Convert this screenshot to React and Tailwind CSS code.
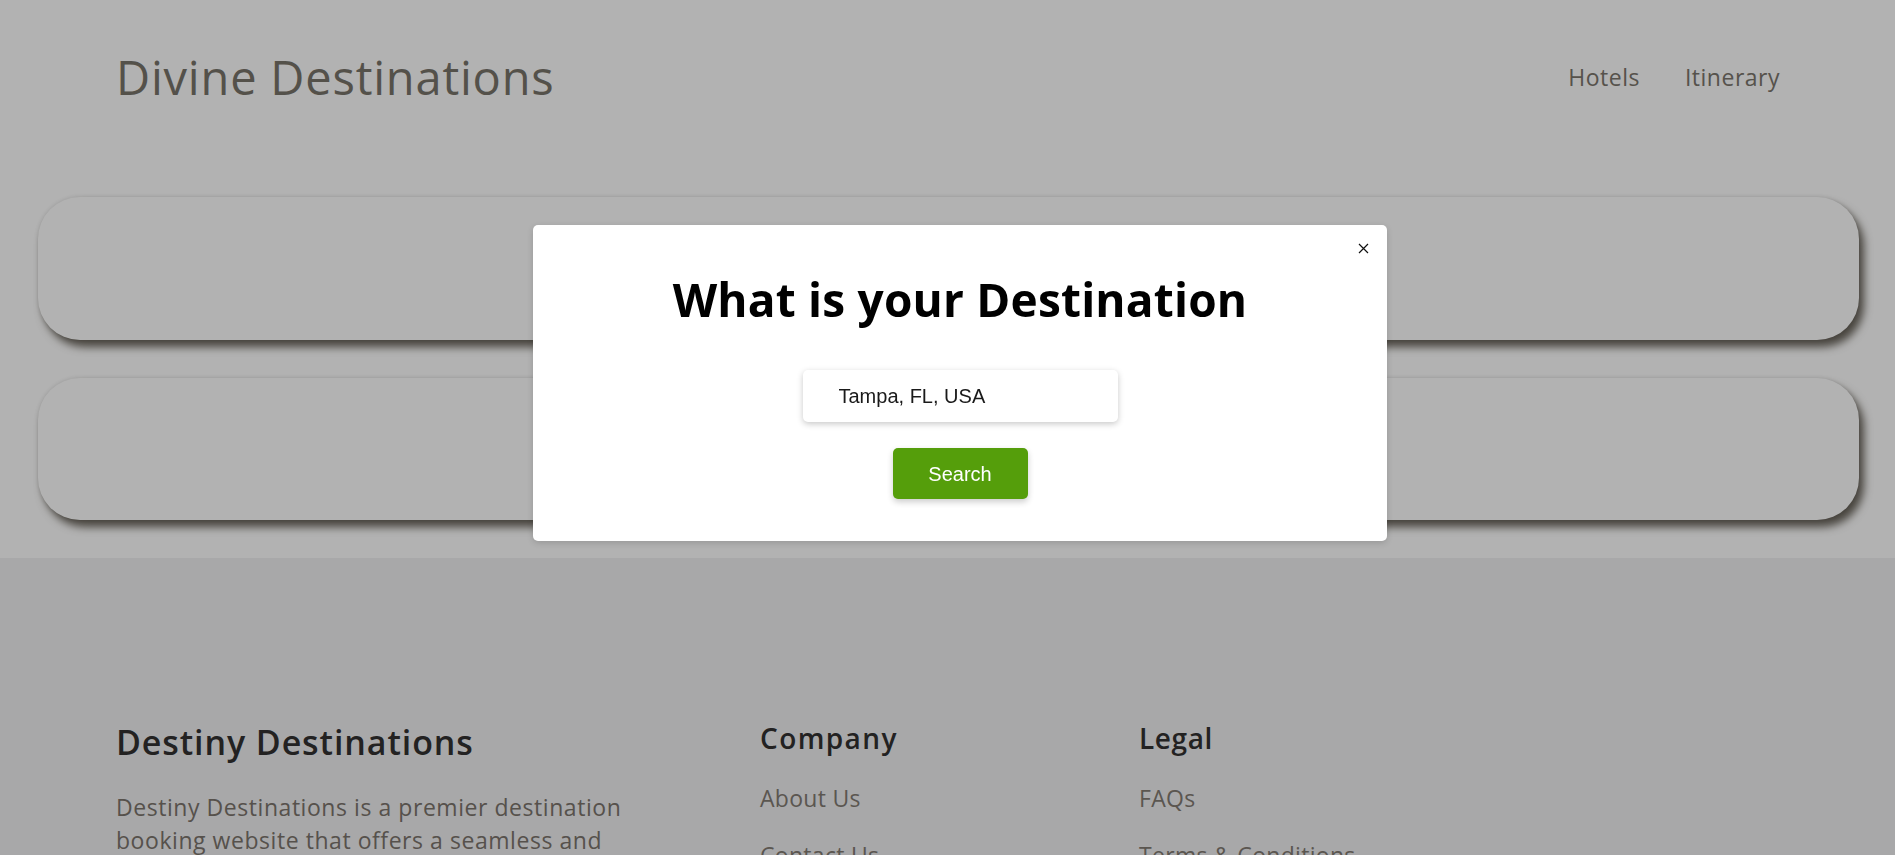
import React from "react";

function CloseIcon() {
  return (
    <svg width="11" height="11" viewBox="0 0 11 11" fill="none">
      <path d="M1 1L10 10M10 1L1 10" stroke="#111" strokeWidth="1.2" />
    </svg>
  );
}

export default function App() {
  return (
    <div className="relative min-h-screen bg-white font-['Open_Sans',sans-serif]">
      <header className="h-[154px] flex items-center justify-between pl-[116px] pr-[115px]">
        <h1 className="text-[47px] leading-[60px] tracking-[0.8px] text-[#79746b] font-normal">
          Divine Destinations
        </h1>
        <nav className="flex gap-[45px] text-[23px] leading-[32px] tracking-[0.5px] text-[#7b766d]">
          <a href="#">Hotels</a>
          <a href="#">Itinerary</a>
        </nav>
      </header>

      <main className="pl-[38px] pr-[36px] pt-[43px] pb-[38px] flex flex-col gap-[38px]">
        <div className="h-[143px] rounded-[42px] bg-white shadow-[5px_7px_9px_rgba(55,48,36,0.75),0_0_4px_rgba(0,0,0,0.12)]" />
        <div className="h-[142px] rounded-[42px] bg-white shadow-[5px_7px_9px_rgba(55,48,36,0.75),0_0_4px_rgba(0,0,0,0.12)]" />
      </main>

      <footer className="bg-[#f1f1f3] pt-[162px] pb-[80px] pl-[116px] pr-[116px] flex">
        <div className="w-[644px] shrink-0">
          <h2 className="text-[34px] leading-[44px] font-semibold tracking-[0.9px] text-[#333231]">
            Destiny Destinations
          </h2>
          <p className="mt-[27px] w-[540px] text-[23px] leading-[33px] tracking-[0.55px] text-[#7c756d]">
            Destiny Destinations is a premier destination booking website that offers a seamless and
            hassle-free experience for travelers looking to explore the world's most beautiful places.
          </p>
        </div>
        <div className="w-[379px] shrink-0">
          <h3 className="text-[28px] leading-[36px] font-semibold tracking-[1.4px] text-[#333231]">
            Company
          </h3>
          <ul className="mt-[26px] flex flex-col gap-[25px] text-[23px] leading-[32px] tracking-[0.3px] text-[#837c73]">
            <li>About Us</li>
            <li>Contact Us</li>
            <li>Careers</li>
          </ul>
        </div>
        <div className="flex-1">
          <h3 className="text-[28px] leading-[36px] font-semibold tracking-[0.6px] text-[#333231]">
            Legal
          </h3>
          <ul className="mt-[26px] flex flex-col gap-[25px] text-[23px] leading-[32px] tracking-[0.3px] text-[#837c73]">
            <li>FAQs</li>
            <li>Terms &amp; Conditions</li>
            <li>Privacy Policy</li>
          </ul>
        </div>
      </footer>

      <div className="fixed inset-0 bg-black/30" />

      <div className="fixed left-[533px] top-[225px] w-[854px] h-[316px] bg-white rounded-[5px] shadow-[0_2px_6px_rgba(0,0,0,0.15)] flex flex-col items-center pt-[47px]">
        <button className="absolute top-[18px] right-[18px] w-[11px] h-[11px] flex items-center justify-center">
          <CloseIcon />
        </button>
        <h2 className="text-[46px] leading-[55px] font-bold text-black tracking-[0.2px]">
          What is your Destination
        </h2>
        <input
          defaultValue="Tampa, FL, USA"
          className="mt-[43px] w-[315px] h-[52px] rounded-[5px] bg-white pl-[36px] text-[20px] text-[#1a1a1a] font-['Liberation_Sans',Arial,sans-serif] shadow-[0_2px_6px_rgba(0,0,0,0.22)] outline-none"
        />
        <button className="mt-[26px] w-[135px] h-[51px] rounded-[5px] bg-[#559e0b] text-white text-[20px] font-['Liberation_Sans',Arial,sans-serif] shadow-[0_3px_6px_rgba(0,0,0,0.2)]">
          Search
        </button>
      </div>
    </div>
  );
}
